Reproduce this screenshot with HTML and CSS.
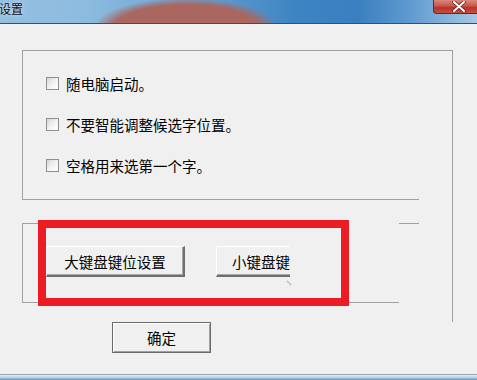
FILE: index.html
```html
<!DOCTYPE html>
<html lang="zh-CN">
<head>
    <meta charset="UTF-8">
    <title>设置</title>
    <link rel="stylesheet" href="styles.css">
</head>
<body>
    <div class="titlebar">
        <span class="title">设置</span>
        <span class="close">
            <svg width="16" height="11" viewBox="0 0 16 11">
                <path d="M3 1 L13 10 M13 1 L3 10" stroke="#5a2020" stroke-width="3.4" stroke-linecap="round"/>
                <path d="M3 1 L13 10 M13 1 L3 10" stroke="#ffffff" stroke-width="2" stroke-linecap="round"/>
            </svg>
        </span>
    </div>

    <div class="content">
        <div class="panel">
            <div class="group options">
                <label class="option"><span class="checkbox"></span>随电脑启动。</label>
                <label class="option"><span class="checkbox"></span>不要智能调整候选字位置。</label>
                <label class="option"><span class="checkbox"></span>空格用来选第一个字。</label>
            </div>
            <div class="group keys">
                <button class="btn btn-big">大键盘键位设置</button>
                <button class="btn btn-small">小键盘键</button>
                <span class="grip"></span>
            </div>
        </div>
        <button class="btn btn-ok">确定</button>
    </div>

    <!-- red highlight drawn over the dialog -->
    <div class="highlight"></div>

    <div class="taskbar"></div>
</body>
</html>
```

FILE: styles.css
```css
body {
    margin: 0;
    width: 477px;
    height: 380px;
    overflow: hidden;
    background-color: #f0f0f0;
    font-family: "Noto Sans CJK SC", "DejaVu Sans", sans-serif;
    color: #000;
    position: relative;
}

.titlebar {
    height: 23px;
    border-bottom: 1px solid #35506c;
    display: flex;
    align-items: flex-start;
    background:
        radial-gradient(ellipse 92px 30px at 186px 28px, #a9675f 0, #a9675f 78%, rgba(169, 103, 95, 0) 100%),
        linear-gradient(to right, #93bfe0 0, #8dbbdf 18%, #6aa2d2 40%, #3d84c3 62%, #3a80c0 75%, #5f9ad0 86%, #a6c8e5 100%);
}

.title {
    font-size: 12px;
    line-height: 12px;
    margin-top: 3px;
    margin-left: -1px;
    color: #111;
    text-shadow: 0 0 4px rgba(255, 255, 255, 0.8);
}

.close {
    margin-left: auto;
    width: 44px;
    height: 14px;
    box-sizing: border-box;
    border: 1px solid #5b2b2b;
    border-top: none;
    border-right: none;
    border-radius: 0 0 0 4px;
    background: linear-gradient(to bottom, #d88a7c 0, #c9564a 45%, #b8322a 60%, #c8503e 100%);
    display: flex;
    justify-content: center;
    align-items: center;
    padding-left: 6px;
}

.content {
    padding: 26px 0 0 22px;
}

.panel {
    width: 431px;
    height: 272px;
    box-sizing: border-box;
    border-top: 1px solid #a0a0a0;
    border-right: 1px solid #a0a0a0;
}

.group {
    width: 397px;
    box-sizing: border-box;
    border-left: 1px solid #a0a0a0;
}

.options {
    height: 149px;
    border-bottom: 1px solid #a0a0a0;
    padding: 22px 0 0 23px;
    display: flex;
    flex-direction: column;
    gap: 21px;
}

.option {
    display: flex;
    align-items: center;
    height: 20px;
    font-size: 14.5px;
}

.checkbox {
    width: 13px;
    height: 13px;
    box-sizing: border-box;
    border: 1px solid #8e8f8f;
    background: linear-gradient(135deg, #d4d4d4 0, #f2f2f2 50%, #ffffff 100%);
    margin-right: 7px;
}

.keys {
    margin-top: 23px;
    height: 80px;
    padding: 23px 0 0 23px;
    display: flex;
    align-items: flex-start;
    background:
        linear-gradient(to right, #a0a0a0 0, #a0a0a0 16px, transparent 16px, transparent 376px, #a0a0a0 376px, #a0a0a0 396px, transparent 396px) top left / 100% 1px no-repeat,
        linear-gradient(to right, #a0a0a0 0, #a0a0a0 376px, transparent 376px) bottom left / 100% 1px no-repeat;
}

.btn {
    font-family: "Noto Sans CJK SC", "DejaVu Sans", sans-serif;
    font-size: 14.5px;
    color: #000;
    height: 31px;
    box-sizing: border-box;
    padding: 0;
    background-color: #f0f0f0;
    border-style: solid;
    border-width: 1px 2px 2px 1px;
    border-color: #ffffff #6e6e6e #6e6e6e #ffffff;
    box-shadow: inset -1px -1px 0 #a8a8a8;
}

.btn-big {
    width: 139px;
}

.btn-small {
    width: 74px;
    margin-left: 31px;
    border-right: none;
    box-shadow: inset 0 -1px 0 #a8a8a8;
    text-align: right;
    padding-right: 0;
}

.grip {
    width: 6px;
    height: 2px;
    margin: 36px 0 0 -4px;
    background-color: #c8c8c8;
    transform: rotate(45deg);
}

.btn-ok {
    display: block;
    width: 99px;
    margin-left: 90px;
    border: 1px solid #6a6a6a;
    box-shadow: inset 1px 1px 0 #ffffff, inset -1px -1px 0 #a0a0a0;
}

.highlight {
    position: absolute;
    left: 38px;
    top: 220px;
    width: 311px;
    height: 86px;
    box-sizing: border-box;
    border: 8px solid #ec1c25;
}

.taskbar {
    position: absolute;
    left: 0;
    bottom: 0;
    width: 100%;
    height: 5px;
    border-top: 1px solid #9aa8b2;
    background: linear-gradient(to bottom, #e4f0f6 0, #a9c9de 60%, #5d8fb8 100%);
}
```
